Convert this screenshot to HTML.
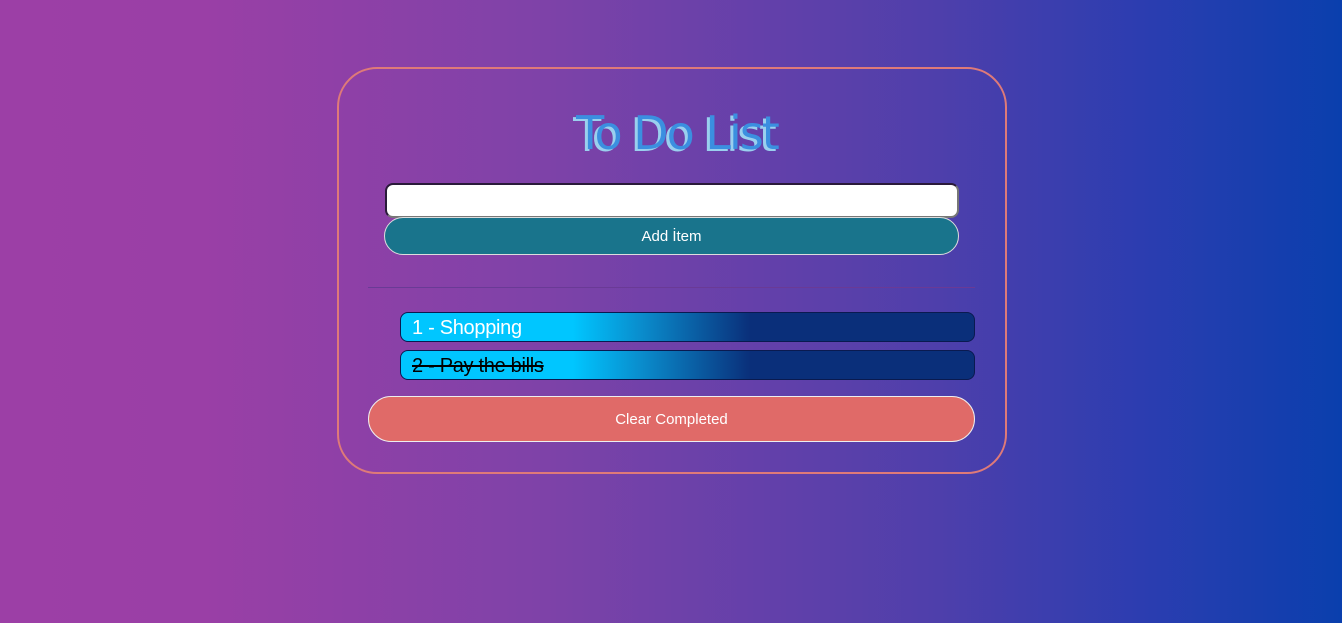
<!DOCTYPE html>
<html><head><style>
body{margin:0;width:1342px;height:623px;overflow:hidden;background:linear-gradient(90deg,#9c3fa6 0%,#9a3fa6 15%,#7f42a8 40%,#4e3fab 70%,#2c3db0 85%,#0a3fad 100%);font-family:"Liberation Sans",sans-serif;position:relative}
.card{position:absolute;left:337px;top:67px;width:666px;height:403px;border:2px solid #df7a78;border-radius:40px}
h1{position:absolute;left:0;right:0;top:106px;margin:0;text-align:center;font-size:46px;font-weight:normal;color:#3b8fe0;letter-spacing:-2px;text-shadow:-3px 2px 0 #9ad0ee;font-family:"DejaVu Sans","Liberation Sans",sans-serif;padding-left:12px}
.inp{position:absolute;left:385px;top:183px;width:570px;height:31px;background:#fff;border:2px solid #2a1a3a;border-right-color:#777;border-bottom-color:#777;border-radius:8px}
.add{position:absolute;left:384px;top:217px;width:573px;height:36px;background:#19748c;border:1px solid #ddd;border-radius:19px;color:#fff;font-size:15px;text-align:center;line-height:38px}
.hr{position:absolute;left:368px;top:287px;width:607px;height:1px;background:#6a3a96}
.item{position:absolute;left:400px;height:28px;border:1px solid #0a1a50;border-radius:8px;background:linear-gradient(90deg,#00c6ff 0%,#00c6ff 30%,#0a8ccc 42%,#0a2f7a 61%,#0a2f7a 100%);font-size:20px;line-height:31px;padding-left:11px;width:562px;letter-spacing:-0.3px}
.clear{position:absolute;left:368px;top:396px;width:605px;height:44px;background:#e06a68;border:1px solid #eee;border-radius:23px;color:#fff;font-size:15px;text-align:center;line-height:46px}
</style></head><body>
<div class="card"></div>
<h1>To Do List</h1>
<div class="inp"></div>
<div class="add">Add İtem</div>
<div class="hr"></div>
<div class="item" style="top:312px;color:#fff">1 - Shopping</div>
<div class="item" style="top:350px;color:#000;text-decoration:line-through">2 - Pay the bills</div>
<div class="clear">Clear Completed</div>
</body></html>
